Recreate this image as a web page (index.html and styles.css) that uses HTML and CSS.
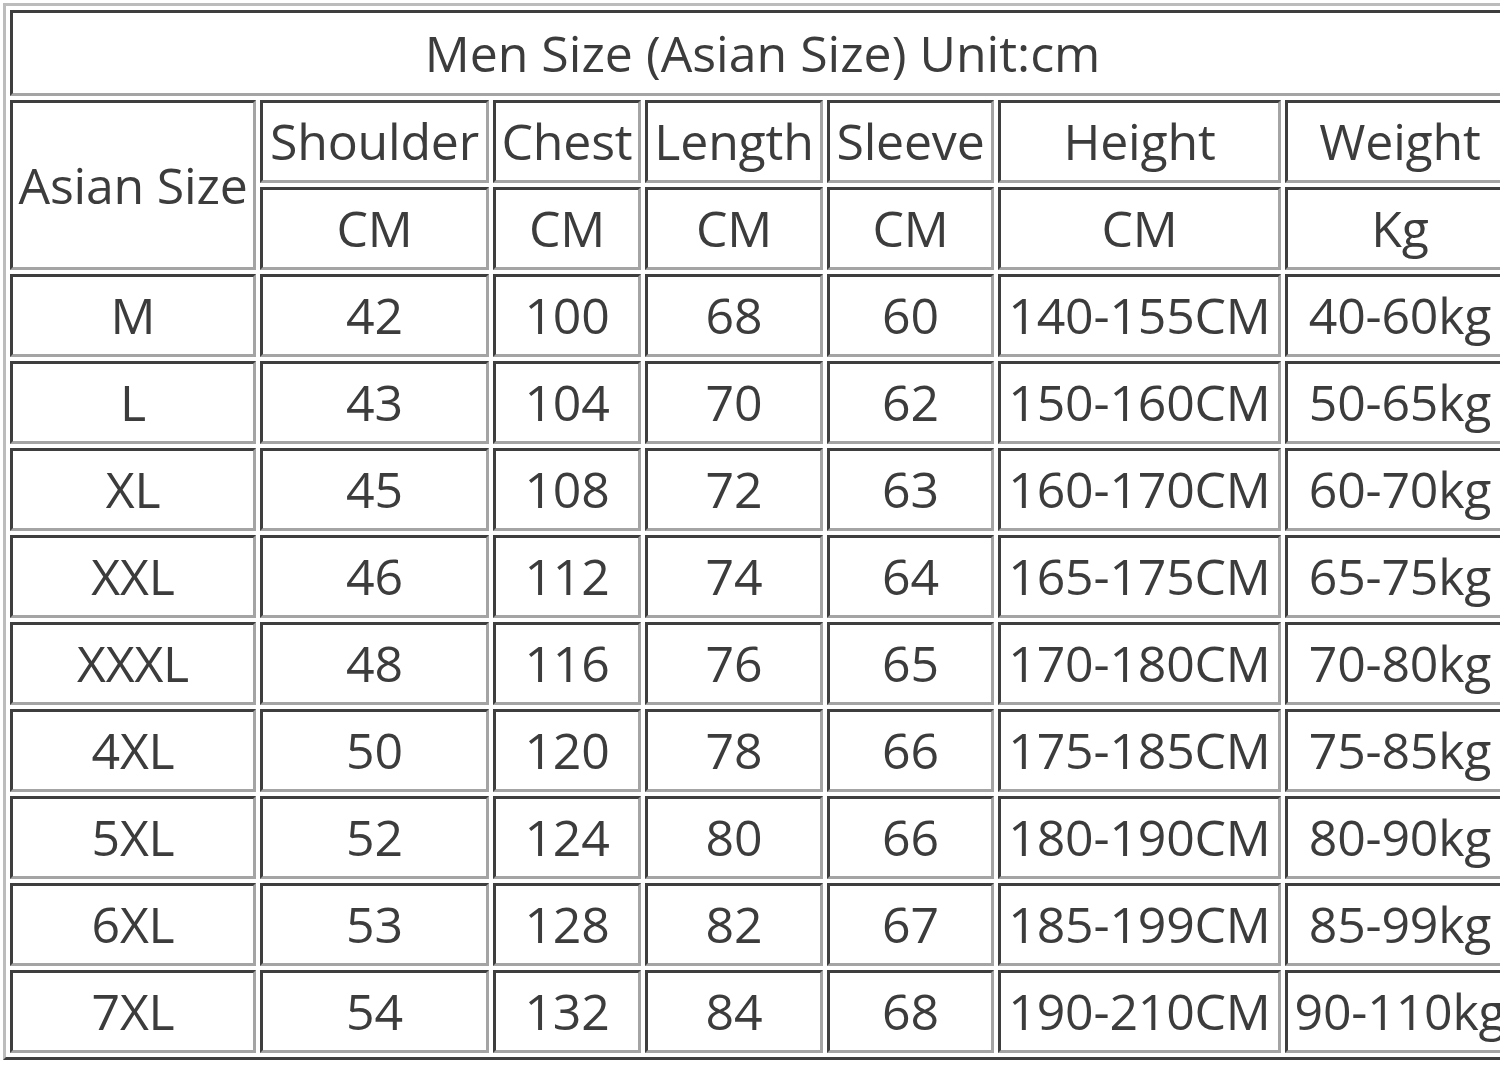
FILE: index.html
```html
<!DOCTYPE html>
<html lang="en">
<head>
<meta charset="utf-8">
<title>Men Size (Asian Size) Unit:cm</title>
<link rel="stylesheet" href="styles.css">
</head>
<body>
<table class="size-table">
  <colgroup>
    <col class="c-size">
    <col class="c-shoulder">
    <col class="c-chest">
    <col class="c-length">
    <col class="c-sleeve">
    <col class="c-height">
    <col class="c-weight">
  </colgroup>
  <tbody>
    <tr><td colspan="7" class="title">Men Size (Asian Size) Unit:cm</td></tr>
    <tr>
      <td rowspan="2">Asian Size</td>
      <td>Shoulder</td><td>Chest</td><td>Length</td><td>Sleeve</td><td>Height</td><td>Weight</td>
    </tr>
    <tr><td>CM</td><td>CM</td><td>CM</td><td>CM</td><td>CM</td><td>Kg</td></tr>
    <tr><td>M</td><td>42</td><td>100</td><td>68</td><td>60</td><td>140-155CM</td><td>40-60kg</td></tr>
    <tr><td>L</td><td>43</td><td>104</td><td>70</td><td>62</td><td>150-160CM</td><td>50-65kg</td></tr>
    <tr><td>XL</td><td>45</td><td>108</td><td>72</td><td>63</td><td>160-170CM</td><td>60-70kg</td></tr>
    <tr><td>XXL</td><td>46</td><td>112</td><td>74</td><td>64</td><td>165-175CM</td><td>65-75kg</td></tr>
    <tr><td>XXXL</td><td>48</td><td>116</td><td>76</td><td>65</td><td>170-180CM</td><td>70-80kg</td></tr>
    <tr><td>4XL</td><td>50</td><td>120</td><td>78</td><td>66</td><td>175-185CM</td><td>75-85kg</td></tr>
    <tr><td>5XL</td><td>52</td><td>124</td><td>80</td><td>66</td><td>180-190CM</td><td>80-90kg</td></tr>
    <tr><td>6XL</td><td>53</td><td>128</td><td>82</td><td>67</td><td>185-199CM</td><td>85-99kg</td></tr>
    <tr><td>7XL</td><td>54</td><td>132</td><td>84</td><td>68</td><td>190-210CM</td><td>90-110kg</td></tr>
  </tbody>
</table>
</body>
</html>
```
FILE: styles.css
```css
html, body {
  margin: 0;
  padding: 0;
  background: #ffffff;
  overflow: hidden;
}

body {
  width: 1500px;
  height: 1065px;
}

.size-table {
  margin: 3px 0 0 3px;
  table-layout: fixed;
  width: 1519px;
  border-collapse: separate;
  border-spacing: 4px;
  border-style: solid;
  border-width: 3px;
  border-color: #bcbcbc #3e3e3e #3e3e3e #bcbcbc;
  font-family: "Open Sans", "DejaVu Sans", sans-serif;
  font-size: 50px;
  color: #3c3c3c;
}

.c-size { width: 246px; }
.c-shoulder { width: 229px; }
.c-chest { width: 148px; }
.c-length { width: 178px; }
.c-sleeve { width: 167px; }
.c-height { width: 283px; }
.c-weight { width: 230px; }

.size-table td {
  box-sizing: border-box;
  padding: 0;
  line-height: 77px;
  text-align: center;
  white-space: nowrap;
  overflow: visible;
  border-style: solid;
  border-width: 3px;
  border-color: #3e3e3e #a4a4a4 #a4a4a4 #3e3e3e;
  letter-spacing: -0.2px;
}

.size-table td.title {
  line-height: 80px;
  letter-spacing: 0;
}
```
